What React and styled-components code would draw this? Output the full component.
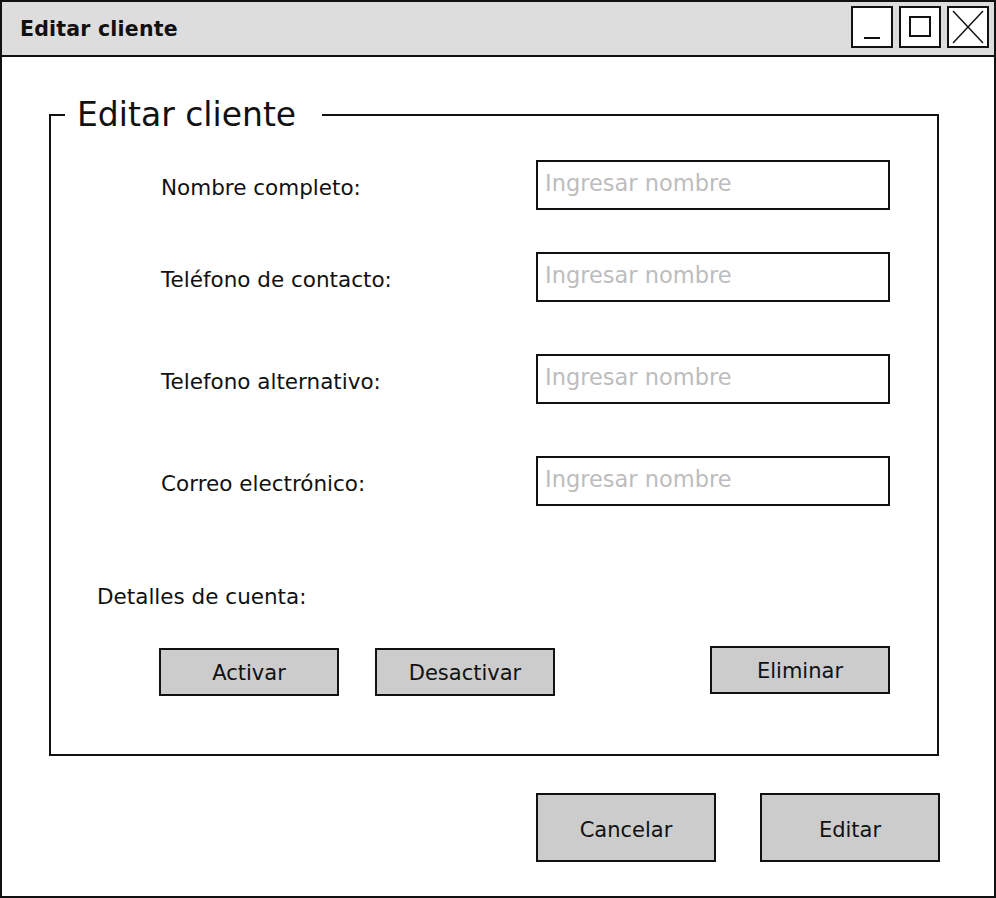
import styled, { createGlobalStyle } from "styled-components";

const GlobalStyle = createGlobalStyle`
  html, body {
    margin: 0;
    padding: 0;
    background: #ffffff;
  }
  * {
    box-sizing: border-box;
  }
  body {
    font-family: "DejaVu Sans", "Noto Sans", sans-serif;
    color: #111;
  }
`;

const Window = styled.div`
  width: 996px;
  height: 898px;
  border: 2px solid #111;
  display: flex;
  flex-direction: column;
  background: #fff;
`;

const TitleBar = styled.div`
  height: 55px;
  flex-shrink: 0;
  background: #dddddd;
  border-bottom: 2px solid #111;
  display: flex;
  align-items: center;
  justify-content: space-between;
  padding: 0 5px 0 18px;
`;

const Title = styled.h1`
  margin: 0;
  font-size: 20.5px;
  font-weight: bold;
  letter-spacing: 0.2px;
`;

const Controls = styled.div`
  display: flex;
  gap: 6px;
  margin-top: -4px;
`;

const ControlBox = styled.div`
  width: 42px;
  height: 42px;
  background: #fff;
  border: 2px solid #111;
  display: flex;
  align-items: center;
  justify-content: center;
`;

const Body = styled.div`
  flex: 1;
  display: flex;
  flex-direction: column;
  padding: 38px 54px 0 47px;
`;

const Group = styled.fieldset`
  margin: 0;
  height: 661px;
  width: 889px;
  border: 2px solid #111;
  padding: 0 47px 0 0;
  display: flex;
  flex-direction: column;
`;

const Legend = styled.legend`
  margin-left: 14px;
  padding: 0 26px 0 12px;
  font-size: 33px;
  line-height: 40px;
`;

const Fields = styled.div`
  display: flex;
  flex-direction: column;
  padding: 25px 0 0 110px;
`;

const Row = styled.div`
  display: grid;
  grid-template-columns: 375px 354px;
  align-items: center;
  margin-top: ${(p) => p.$top || 0}px;
`;

const Label = styled.label`
  font-size: 21.5px;
  line-height: 26px;
  padding-top: 5px;
`;

const Field = styled.input`
  height: 50px;
  width: 354px;
  border: 2px solid #111;
  background: #fff;
  font-family: inherit;
  font-size: 22.5px;
  padding: 0 0 4px 7px;
  outline: none;
  &::placeholder {
    color: #bdbdbd;
  }
`;

const Section = styled.div`
  font-size: 21.5px;
  line-height: 26px;
  padding-left: 46px;
  margin-top: 78px;
`;

const Actions = styled.div`
  display: flex;
  align-items: flex-start;
  gap: 36px;
  padding-left: 108px;
  margin-top: 38px;
`;

const Button = styled.button`
  width: 180px;
  height: ${(p) => p.$h || 48}px;
  background: #cccccc;
  border: 2px solid #111;
  font-family: inherit;
  font-size: 21px;
  color: #111;
  padding: ${(p) => (p.$h ? 4 : 2)}px 0 0;
  margin-left: ${(p) => (p.$push ? "auto" : "0")};
  margin-top: ${(p) => p.$raise || 0}px;
`;

const Footer = styled.div`
  display: flex;
  justify-content: flex-end;
  gap: 44px;
  margin-top: 37px;
`;

const rows = [
  { label: "Nombre completo:", top: 0 },
  { label: "Teléfono de contacto:", top: 42 },
  { label: "Telefono alternativo:", top: 52 },
  { label: "Correo electrónico:", top: 52 },
];

export default function App() {
  return (
    <>
      <GlobalStyle />
      <Window>
        <TitleBar>
          <Title>Editar cliente</Title>
          <Controls>
            <ControlBox>
              <svg width="38" height="38" viewBox="0 0 38 38">
                <line x1="11" y1="30" x2="27" y2="30" stroke="#111" strokeWidth="2" />
              </svg>
            </ControlBox>
            <ControlBox>
              <svg width="38" height="38" viewBox="0 0 38 38">
                <rect x="9" y="9" width="20" height="19" fill="none" stroke="#111" strokeWidth="2" />
              </svg>
            </ControlBox>
            <ControlBox>
              <svg width="38" height="38" viewBox="0 0 38 38">
                <line x1="4" y1="3" x2="34" y2="35" stroke="#111" strokeWidth="1.5" />
                <line x1="34" y1="3" x2="4" y2="35" stroke="#111" strokeWidth="1.5" />
              </svg>
            </ControlBox>
          </Controls>
        </TitleBar>
        <Body>
          <Group>
            <Legend>Editar cliente</Legend>
            <Fields>
              {rows.map((r) => (
                <Row key={r.label} $top={r.top}>
                  <Label>{r.label}</Label>
                  <Field placeholder="Ingresar nombre" />
                </Row>
              ))}
            </Fields>
            <Section>Detalles de cuenta:</Section>
            <Actions>
              <Button>Activar</Button>
              <Button>Desactivar</Button>
              <Button $push $raise={-2}>
                Eliminar
              </Button>
            </Actions>
          </Group>
          <Footer>
            <Button $h={69}>Cancelar</Button>
            <Button $h={69}>Editar</Button>
          </Footer>
        </Body>
      </Window>
    </>
  );
}
